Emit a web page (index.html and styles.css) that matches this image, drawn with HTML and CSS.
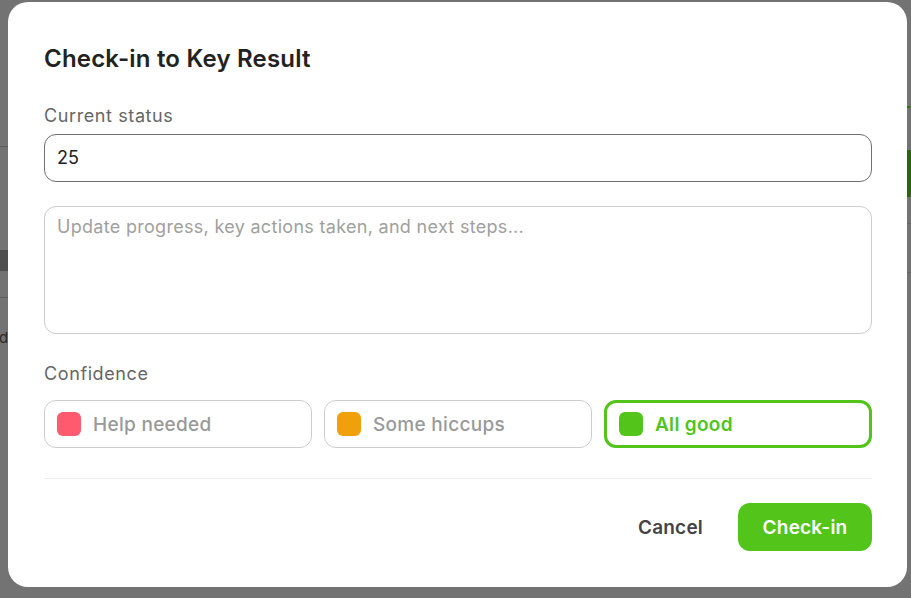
FILE: index.html
```html
<!DOCTYPE html>
<html>
<head>
<meta charset="utf-8">
<title>Check-in to Key Result</title>
<link rel="stylesheet" href="styles.css">
</head>
<body>
<div class="page">
	<div class="page-left">
		<div class="pl-line pl-first"></div>
		<div class="pl-icon"></div>
		<div class="pl-line"></div>
		<div class="pl-text">data</div>
	</div>
	<div class="page-right">
		<div class="pr-green-line"></div>
		<div class="pr-green"></div>
		<div class="pr-line"></div>
		<div class="pr-line"></div>
	</div>
</div>
<div class="overlay">
	<div class="modal">
		<h2 class="modal-title">Check-in to Key Result</h2>
		<label class="field-label">Current status</label>
		<div class="input">25</div>
		<div class="textarea">Update progress, key actions taken, and next steps...</div>
		<label class="field-label conf-label">Confidence</label>
		<div class="conf-list">
			<div class="conf"><span class="dot red"></span>Help needed</div>
			<div class="conf"><span class="dot orange"></span>Some hiccups</div>
			<div class="conf active"><span class="dot green"></span>All good</div>
		</div>
		<div class="modal-foot">
			<span class="btn-cancel">Cancel</span>
			<span class="btn-ok">Check-in</span>
		</div>
	</div>
</div>
</body>
</html>
```

FILE: styles.css
```css
*{ margin:0; padding:0; box-sizing:border-box;}
body{ background:#737373; font-family:Inter, "Noto Sans", sans-serif; width:911px; height:598px; overflow:hidden;}
.page{ display:flex; justify-content:space-between; height:598px;}
.page-left{ width:8px; padding-top:146px;}
.pl-line{ height:1px; background:#5e5e5e;}
.pl-first{ margin-bottom:103px;}
.pl-icon{ height:21px; background:#4f4f4f; margin-bottom:26px;}
.pl-text{ margin-top:30px; margin-left:-1px; font-size:15px; color:#2a2a2a; white-space:nowrap;}
.page-right{ width:4px; padding-top:106px;}
.pr-green-line{ height:2px; background:#3f6b1f; margin-bottom:42px;}
.pr-green{ height:47px; background:#2f6313; margin-bottom:26px;}
.pr-line{ height:1px; background:#666; margin-bottom:48px;}

.overlay{ position:absolute; left:0; top:0; width:911px; height:598px; padding:2px 4px 0 8px;}
.modal{ width:899px; height:585px; background:#fff; border-radius:20px; padding:40px 35px 0 36px; display:flex; flex-direction:column;}
.modal-title{ font-size:24px; line-height:34px; font-weight:600; color:#222; letter-spacing:0.2px; margin-bottom:29px;}
.field-label{ display:block; font-size:18px; line-height:22px; color:#666; letter-spacing:0.6px; margin-bottom:7px;}
.input{ height:48px; border:1px solid #707070; border-radius:12px; padding:0 12px; font-size:18px; line-height:46px; color:#222;}
.textarea{ height:128px; margin-top:24px; border:1px solid #cccccc; border-radius:12px; padding:9px 12px; font-size:18px; line-height:22px; letter-spacing:0.3px; color:#a0a0a0;}
.conf-label{ margin-top:29px; margin-bottom:15px;}
.conf-list{ display:grid; grid-template-columns:repeat(3,1fr); gap:12px;}
.conf{ height:48px; border:1px solid #cccccc; border-radius:12px; display:flex; align-items:center; padding-left:12px; font-size:19px; font-weight:500; letter-spacing:0.3px; color:#999;}
.conf.active{ border:3px solid #52c41a; color:#52c41a; font-weight:600;}
.dot{ width:24px; height:24px; border-radius:6px; margin-right:12px;}
.red{ background:#ff5a6e;}
.orange{ background:#f0a00a;}
.green{ background:#52c41a;}
.modal-foot{ margin-top:30px; border-top:1px solid #eeeeee; padding-top:24px; display:flex; justify-content:flex-end; align-items:center; gap:35px;}
.btn-cancel{ font-size:19px; font-weight:600; color:#444; letter-spacing:0.2px;}
.btn-ok{ width:134px; height:48px; border-radius:12px; background:#52c41a; color:#fff; font-size:19px; font-weight:600; letter-spacing:0.2px; display:flex; align-items:center; justify-content:center;}
```
